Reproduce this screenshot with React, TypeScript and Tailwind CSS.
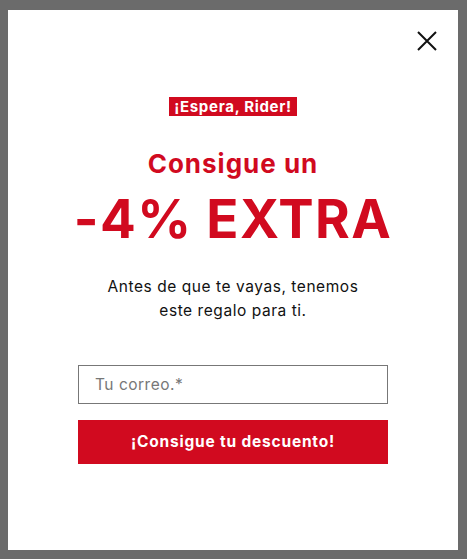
import React from "react";

export default function App() {
  const font = { fontFamily: "Inter, 'Noto Sans', sans-serif" };
  return (
    <div className="w-[467px] h-[559px] bg-[#6b6b6b] pt-[10px] pl-[8px] overflow-hidden" style={font}>
      <div className="relative w-[450px] h-[540px] bg-white flex flex-col items-center pt-[87px]">
        <button className="absolute right-[20px] top-[20px] w-[22px] h-[22px] flex items-center justify-center">
          <svg width="22" height="22" viewBox="0 0 22 22" fill="none" stroke="#111" strokeWidth="2">
            <path d="M2 2 L20 20 M20 2 L2 20" />
          </svg>
        </button>
        <div className="bg-[#d10a1f] text-white font-bold text-[15px] leading-[19px] h-[19px] px-[5px] tracking-[0.7px]">
          ¡Espera, Rider!
        </div>
        <div className="mt-[31px] text-[#d10a1f] font-bold text-[26px] leading-[33px] tracking-[1px]">Consigue un</div>
        <div className="mt-[9px] text-[#d10a1f] font-bold text-[53px] leading-[60px] tracking-[1.4px]">-4% EXTRA</div>
        <p className="mt-[26px] text-[#111] text-[15.5px] leading-[24px] text-center tracking-[0.55px]">
          Antes de que te vayas, tenemos
          <br />
          este regalo para ti.
        </p>
        <input
          className="mt-[42px] w-[310px] h-[39px] border border-[#777] px-[16px] text-[15.5px] tracking-[0.5px] text-[#333] placeholder:text-[#777] outline-none"
          placeholder="Tu correo.*"
          style={font}
        />
        <button className="mt-[16px] w-[310px] h-[44px] bg-[#d10a1f] text-white font-bold text-[15.5px] tracking-[0.8px]">
          ¡Consigue tu descuento!
        </button>
      </div>
    </div>
  );
}
